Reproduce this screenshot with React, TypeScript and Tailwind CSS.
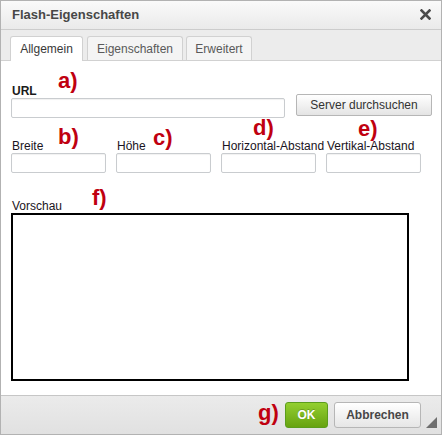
import React from "react";

const font = { fontFamily: '"Liberation Sans", Arial, sans-serif' };

function Ann({ t, x, y }: { t: string; x: number; y: number }) {
  return (
    <span
      className="absolute text-[22px] leading-none font-bold text-[#c00010]"
      style={{ left: x, top: y }}
    >
      {t}
    </span>
  );
}

export default function App() {
  return (
    <div
      className="relative w-[442px] h-[435px] border border-[#b2b2b2] bg-white flex flex-col overflow-hidden text-[12px]"
      style={font}
    >
      {/* header */}
      <div className="h-[29px] shrink-0 border-b border-[#cccccc] bg-gradient-to-b from-[#fafafa] to-[#eaeaea] flex items-center justify-between pl-[11px] pr-[10px]">
        <span className="text-[13px] font-bold text-[#474747]">Flash-Eigenschaften</span>
        <svg width="11" height="11" viewBox="0 0 11 11" className="mt-[-2px]">
          <path d="M1.5 1.5 L9.5 9.5 M9.5 1.5 L1.5 9.5" stroke="#4a4a4a" strokeWidth="2.6" strokeLinecap="square" />
        </svg>
      </div>
      {/* tabs */}
      <div className="h-[31px] shrink-0 border-b border-[#d1d1d1] bg-[#ececec] flex items-end pl-[9px]">
        <div className="w-[73px] h-[25px] -mb-px bg-white border border-b-0 border-[#d1d1d1] rounded-t-[3px] flex items-center justify-center text-[#383838]">
          Allgemein
        </div>
        <div className="ml-[4px] w-[96px] h-[24px] bg-[#f4f4f4] border border-b-0 border-[#d1d1d1] rounded-t-[3px] flex items-center justify-center text-[#595959]">
          Eigenschaften
        </div>
        <div className="ml-[3px] w-[66px] h-[24px] bg-[#f4f4f4] border border-b-0 border-[#d1d1d1] rounded-t-[3px] flex items-center justify-center text-[#595959]">
          Erweitert
        </div>
      </div>
      {/* content */}
      <div className="h-[334px] shrink-0 pt-[23px] pl-[10px] flex flex-col">
        <div className="flex items-end">
          <div className="flex flex-col">
            <div className="h-[14px] leading-[14px] pl-[1px] font-bold text-[#1a1a1a]">URL</div>
            <div className="w-[274px] h-[20px] border border-[#c9cccf] rounded-[2px] bg-white shadow-[inset_0_1px_1px_rgba(0,0,0,0.06)]" />
          </div>
          <div className="ml-[11px] mb-[2px] w-[136px] h-[22px] border border-[#b6b6b6] rounded-[2px] bg-gradient-to-b from-[#ffffff] to-[#e4e4e4] flex items-center justify-center text-[#333333]">
            Server durchsuchen
          </div>
        </div>
        <div className="mt-[21px] grid grid-cols-[95px_95px_95px_95px] gap-x-[10px]">
          {["Breite", "Höhe", "Horizontal-Abstand", "Vertikal-Abstand"].map((l) => (
            <div key={l} className="flex flex-col">
              <div className="h-[14px] leading-[14px] pl-[1px] whitespace-nowrap text-[#1a1422]">{l}</div>
              <div className="w-[95px] h-[20px] border border-[#c9cccf] rounded-[2px] bg-white shadow-[inset_0_1px_1px_rgba(0,0,0,0.06)]" />
            </div>
          ))}
        </div>
        <div className="mt-[26px] flex flex-col">
          <div className="h-[14px] leading-[14px] pl-[1px] text-[#1a1422]">Vorschau</div>
          <div className="w-[398px] h-[168px] border-2 border-black bg-white" />
        </div>
      </div>
      {/* footer */}
      <div className="flex-1 border-t border-[#c6c6c6] bg-gradient-to-b from-[#ebebeb] to-[#e1e1e1] flex justify-end items-start pt-[6px] pr-[20px]">
        <div className="w-[43px] h-[26px] rounded-[3px] border border-[#5b9d1c] bg-gradient-to-b from-[#93cf2f] to-[#67a30f] flex items-center justify-center font-bold text-white [text-shadow:0_-1px_0_rgba(0,0,0,0.2)]">
          OK
        </div>
        <div className="ml-[6px] w-[87px] h-[26px] rounded-[3px] border border-[#b6b6b6] bg-gradient-to-b from-[#ffffff] to-[#e6e6e6] flex items-center justify-center font-bold text-[#474747]">
          Abbrechen
        </div>
      </div>
      {/* resize grip */}
      <svg className="absolute right-[4px] bottom-[6px]" width="11" height="11" viewBox="0 0 11 11">
        <polygon points="11,0 11,11 0,11" fill="#6f6f6f" />
      </svg>
      {/* annotations */}
      <Ann t="a)" x={57} y={69} />
      <Ann t="b)" x={57} y={125} />
      <Ann t="c)" x={152} y={126} />
      <Ann t="d)" x={252} y={116} />
      <Ann t="e)" x={357} y={117} />
      <Ann t="f)" x={91} y={186} />
      <Ann t="g)" x={257} y={401} />
    </div>
  );
}
